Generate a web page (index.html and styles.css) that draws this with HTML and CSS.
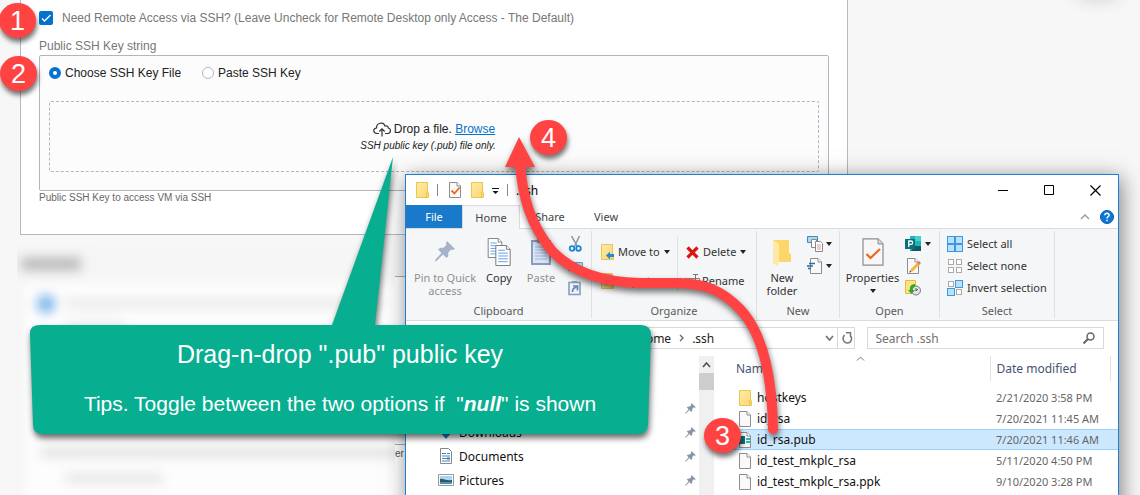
FILE: index.html
```html
<!DOCTYPE html>
<html lang="en">
<head>
<meta charset="utf-8">
<title>SSH key upload</title>
<link rel="stylesheet" href="styles.css">
</head>
<body>
<svg class="defs" aria-hidden="true">
  <defs>
    <linearGradient id="fold" x1="0" y1="0" x2="1" y2="1"><stop offset="0" stop-color="#ffe9a6"/><stop offset="1" stop-color="#fbd970"/></linearGradient>
    <symbol id="folder" viewBox="0 0 13 16"><path d="M.5.5h11v10l1 .5v4.500H.5z" fill="url(#fold)" stroke="#e9c552"/><path d="M10.500 15V10.500l2-.5" fill="none" stroke="#e9c552"/></symbol>
    <symbol id="doc" viewBox="0 0 12 16"><path d="M.5.5h7.500l3.500 3.500v11.500H.5z" fill="#f9f9f9" stroke="#8d8d8d"/><path d="M8 .5V4h3.500" fill="#fff" stroke="#8d8d8d"/></symbol>
    <symbol id="lines" viewBox="0 0 16 22"><path d="M.5.5h11l4 4v17H.5z" fill="#fff" stroke="#777"/><path d="M11.500.5v4h4" fill="#fff" stroke="#777"/><path d="M3 5.500h7M3 8.500h10M3 11.500h10M3 14.500h10M3 17.500h10" stroke="#5b9bea"/></symbol>
    <symbol id="pin" viewBox="0 0 20 21"><path d="M12 0l8 8-2 1-2-.5-3 3.500c1 3 0 4-1.500 5L8 13.500 1.500 20 0 20.500l.5-2L6.500 12 3 8.500C4.500 7 6 6.500 8 7l3.500-3L11 2z" fill="currentColor"/></symbol>
    <symbol id="drop" viewBox="0 0 6 4"><path d="M0 0h6L3 4z" fill="#222"/></symbol>
    <symbol id="sq" viewBox="0 0 8 8"><rect x="1.500" y="1.500" width="5" height="5" fill="#fff" stroke="#aaa"/></symbol>
    <symbol id="sqb" viewBox="0 0 8 8"><rect x=".5" y=".5" width="7" height="7" fill="#b9e1fc" stroke="#3c98e0"/></symbol>
  </defs>
</svg>
<main class="stage">
  <section class="panel">
    <label class="need"><input class="tick" type="checkbox" checked><span>Need Remote Access via SSH? (Leave Uncheck for Remote Desktop only Access - The Default)</span></label>
    <div class="caption">Public SSH Key string</div>
    <div class="keybox">
      <div class="radios">
        <label class="opt"><input class="dot" type="radio" name="mode" checked><span>Choose SSH Key File</span></label>
        <label class="opt"><input class="dot" type="radio" name="mode"><span>Paste SSH Key</span></label>
      </div>
      <div class="dropzone">
        <div class="dropline">
          <svg width="18" height="15" viewBox="0 0 18 15" fill="none" stroke="#333" stroke-width="1.200"><path d="M6 11.500H4C-.3 11-.2 6.500 3.500 6 3.300.8 10.500-.8 12 4c2.300-.6 3.300.6 3.300 2C18.500 7 18 11.300 14.500 11.500H12M9 14.500V7M6.300 9.500L9 6.800l2.700 2.700"/></svg>
          <span>Drop a file. <a class="browse" href="#">Browse</a></span>
        </div>
        <em class="hint">SSH public key (.pub) file only.</em>
      </div>
    </div>
    <div class="help">Public SSH Key to access VM via SSH</div>
  </section>
  <section class="lower">
    <div class="under"><div class="field"></div><span class="tail">er</span></div>
    <div class="haze">
      <div class="hazecard"></div>
      <div class="smear smear-title"></div>
      <div class="smear smear-dot"></div>
      <div class="smear smear-a"></div>
      <div class="smear smear-b"></div>
      <div class="smear smear-c"></div>
      <div class="smear smear-d"></div>
    </div>
  </section>
  <div class="corner"></div>

  <section class="window">
    <header class="titlebar">
      <svg class="quick" width="100" height="18" viewBox="0 0 100 18">
        <use href="#folder" x="0" y="1" width="13" height="16"/><path d="M21.500 3v12M91.500 3v12" stroke="#888"/>
        <use href="#doc" x="33" y="1" width="12" height="16"/><path d="M35.500 9.500l3 3 5-6" fill="none" stroke="#f0661e" stroke-width="1.800"/>
        <use href="#folder" x="55" y="1" width="13" height="16"/><path d="M76 7.500h7" stroke="#111"/><path d="M76.500 10h6l-3 3z" fill="#111"/>
      </svg>
      <span class="wtitle">.ssh</span>
      <div class="winbtns">
        <button class="wbtn" aria-label="Minimize"><svg width="11" height="11"><path d="M0 5.500h10" stroke="#000"/></svg></button>
        <button class="wbtn" aria-label="Maximize"><svg width="11" height="11"><path d="M.5.5h9v9h-9z" fill="none" stroke="#000"/></svg></button>
        <button class="wbtn" aria-label="Close"><svg width="11" height="11"><path d="M.5.5l10 10m0-10l-10 10" stroke="#000" stroke-width="1.200"/></svg></button>
      </div>
    </header>
    <nav class="tabs">
      <button class="tab file">File</button><button class="tab home">Home</button><button class="tab share">Share</button><button class="tab view">View</button>
      <div class="tabend"><svg width="10" height="6"><path d="M1 5l4-4 4 4" fill="none" stroke="#999" stroke-width="1.400"/></svg>
      <svg width="14" height="14" viewBox="0 0 14 14"><circle cx="7" cy="7" r="6.500" fill="#0a78d6" stroke="#0a5aa6"/><path d="M4.800 5.200c.2-2.500 4.500-2.400 4.300 0C9 6.500 7 6.600 7 8.500M7 9.700v1.500" fill="none" stroke="#fff" stroke-width="1.500"/></svg></div>
    </nav>
    <div class="ribbon">
      <div class="group g-clip">
        <div class="tools">
          <button class="big w-pin muted"><svg width="20" height="28" viewBox="0 -3 20 28"><use href="#pin" width="20" height="21" color="#a5b2c8"/></svg><span>Pin to Quick access</span></button>
          <button class="big w-copy"><svg width="24" height="28" viewBox="0 0 24 28"><use href="#lines" x="0" y="0" width="16" height="20"/><use href="#lines" x="8" y="7" width="16" height="21"/></svg><span>Copy</span></button>
          <button class="big w-paste muted"><svg width="20" height="28" viewBox="0 0 20 28"><path d="M1 3h18v23H1z" fill="#dbe4f4" stroke="#8b9bbd" stroke-width="2"/><path d="M6 1h8v4H6z" fill="#8b9bbd"/><path d="M4 9h12M4 12h12M4 15h12M4 18h12M4 21h12" stroke="#9fb4dc"/></svg><span>Paste</span></button>
          <div class="minis">
            <svg width="16" height="16" viewBox="0 0 16 16" fill="none"><path d="M3.500 0l6 10.500M11.500 0L6.500 10.500" stroke="#8795a5" stroke-width="1.500"/><circle cx="4" cy="12.500" r="2.300" stroke="#1688d4" stroke-width="1.800"/><circle cx="10.500" cy="12.500" r="2.300" stroke="#1688d4" stroke-width="1.800"/></svg>
            <svg width="16" height="16" viewBox="0 0 16 16"><path d="M.5 4.500h14v8H.5z" fill="#a9d4f5" stroke="#5fa2d4"/><path d="M2 6l2 5m1-5l1 5m2-1h1m1 0h1m1 0h1" stroke="#222"/></svg>
            <svg width="16" height="16" viewBox="0 0 16 16"><path d="M1 2.500h11v12H1z" fill="#eef3fb" stroke="#8b9bbd" stroke-width="1.600"/><path d="M4 1h5v2H4z" fill="#8b9bbd"/><path d="M4.500 12c0-3 2-4.500 4-4.500M5 6h4.500v4.500" fill="none" stroke="#6c83b0" stroke-width="1.700"/></svg>
          </div>
        </div>
        <div class="gname">Clipboard</div>
      </div>
      <div class="group g-org">
        <div class="tools">
          <div class="stack first">
            <button class="row"><svg width="13" height="16"><use href="#folder" width="13" height="16"/><path d="M5 11.500l4-4v2.500h4v3H9v2.500z" fill="#2a86d6"/></svg>Move to<svg width="6" height="4"><use href="#drop" width="6" height="4"/></svg></button>
            <button class="row"><svg width="13" height="16"><use href="#folder" width="13" height="16"/><use href="#doc" x="4" y="1" width="9" height="11"/></svg>Copy to<svg width="6" height="4"><use href="#drop" width="6" height="4"/></svg></button>
          </div>
          <div class="stack second">
            <button class="row"><svg width="13" height="13" viewBox="0 0 13 13"><path d="M1.500 1.500l10 10m0-10l-10 10" stroke="#dd1414" stroke-width="3.200"/></svg>Delete<svg width="6" height="4"><use href="#drop" width="6" height="4"/></svg></button>
            <button class="row rename"><svg width="16" height="14" viewBox="0 0 16 14"><path d="M.5 4.500h15v7H.5z" fill="#fff" stroke="#888"/><path d="M2 6h8v4H2z" fill="#7eb4ea"/><path d="M9 .5h5M11.500.5v13M9 13.500h5" stroke="#777"/></svg>Rename</button>
          </div>
        </div>
        <div class="gname">Organize</div>
      </div>
      <div class="group g-new">
        <div class="tools">
          <button class="big w-new"><svg width="20" height="28" viewBox="0 0 20 28"><path d="M1 2h16v13l2 1v8H1z" fill="#fbd668"/><path d="M1 2l6 4v17l-1 6-5-4z" fill="#ffe9a9"/></svg><span>New folder</span></button>
          <div class="minis">
            <div class="mini"><svg width="16" height="16" viewBox="0 0 16 16"><path d="M.5.5h10v6H.5z" fill="#aed7f0" stroke="#3f8cb8"/><path d="M4.500 3.500h5v8h-5z" fill="#fff" stroke="#888"/><path d="M8.500 5.500h5l2 2v8h-7z" fill="#fff" stroke="#888"/><path d="M10 9h4M10 11h4M10 13h4" stroke="#e39aa0"/></svg><svg width="6" height="4"><use href="#drop" width="6" height="4"/></svg></div>
            <div class="mini"><svg width="16" height="16" viewBox="0 0 16 16"><use href="#doc" x="3" y="0" width="12" height="16"/><path d="M2 5.500h6M0 8h6M1 10.500h3" stroke="#2a6ca8" stroke-width="1.300"/></svg><svg width="6" height="4"><use href="#drop" width="6" height="4"/></svg></div>
          </div>
        </div>
        <div class="gname">New</div>
      </div>
      <div class="group g-open">
        <div class="tools">
          <button class="big w-prop"><svg width="22" height="28" viewBox="0 0 22 28"><path d="M1 .8h15l5 5v21.400H1z" fill="#f7f7f7" stroke="#8c8c8c" stroke-width="1.200"/><path d="M16 1v5h5" fill="#ddd" stroke="#8c8c8c"/><path d="M4.500 16l4 4L18 11" fill="none" stroke="#f0661e" stroke-width="2.200"/></svg><span>Properties</span><svg width="6" height="4"><use href="#drop" width="6" height="4"/></svg></button>
          <div class="minis">
            <div class="mini"><svg width="17" height="16" viewBox="0 0 17 16"><path d="M5 0h11v15H5z" fill="#20b3b8"/><path d="M10 0h6v5h-6z" fill="#48d0d3"/><path d="M10 10h6v5H6z" fill="#11595c"/><path d="M0 3h10v10H0z" fill="#087277"/><path d="M3.800 11V5h2c2.500 0 2.500 3.300 0 3.300H4" fill="none" stroke="#fff" stroke-width="1.300"/></svg><svg width="6" height="4"><use href="#drop" width="6" height="4"/></svg></div>
            <div class="mini"><svg width="16" height="16" viewBox="0 0 16 16"><use href="#doc" x="2" y="0" width="12" height="16"/><path d="M6 13l8-8" stroke="#f1b93a" stroke-width="3"/><path d="M13 6l2-2" stroke="#e0786a" stroke-width="3"/><path d="M4.500 14.500l.5-2 1.500 1.500z" fill="#333"/></svg></div>
            <div class="mini"><svg width="16" height="16" viewBox="0 0 16 16"><path d="M.5.5h10v13H.5z" fill="#ffe083" stroke="#e3bd42"/><circle cx="11" cy="10.500" r="4.500" fill="#e2e2e2" stroke="#777"/><path d="M11 8v3l2-2" fill="none" stroke="#555"/><path d="M10 4C5 4 4.500 8 5 10H3l3.500 4L10 10H8c-.3-2 .5-3 2-3z" fill="#35a82b"/></svg></div>
          </div>
        </div>
        <div class="gname">Open</div>
      </div>
      <div class="group g-sel">
        <div class="tools">
          <div class="stack third">
            <button class="row"><svg width="16" height="16"><use href="#sqb" width="8" height="8"/><use href="#sqb" x="8" width="8" height="8"/><use href="#sqb" y="8" width="8" height="8"/><use href="#sqb" x="8" y="8" width="8" height="8"/></svg>Select all</button>
            <button class="row"><svg width="16" height="16"><use href="#sq" width="8" height="8"/><use href="#sq" x="8" width="8" height="8"/><use href="#sq" y="8" width="8" height="8"/><use href="#sq" x="8" y="8" width="8" height="8"/></svg>Select none</button>
            <button class="row"><svg width="16" height="16"><use href="#sq" width="8" height="8"/><use href="#sqb" x="8" width="8" height="8"/><use href="#sqb" y="8" width="8" height="8"/><use href="#sq" x="8" y="8" width="8" height="8"/></svg>Invert selection</button>
          </div>
        </div>
        <div class="gname">Select</div>
      </div>
    </div>
    <div class="address">
      <div class="path"><span>Home</span><svg width="5" height="8"><path d="M1 1l3 3-3 3" fill="none" stroke="#666" stroke-width="1.300"/></svg><span>.ssh</span>
        <div class="pathend"><svg width="9" height="6"><path d="M1 1l3.500 4L8 1" fill="none" stroke="#777" stroke-width="1.800"/></svg><button class="reload" aria-label="Refresh"><svg width="11" height="12" viewBox="0 0 11 12"><path d="M2.500 3C-.5 7 2 11 5.500 11S11 6.500 8 3M4 .8h4.500V5" fill="none" stroke="#777" stroke-width="1.500"/></svg></button></div>
      </div>
      <div class="search"><input class="find" type="text" placeholder="Search .ssh" aria-label="Search .ssh"><svg width="12" height="12" viewBox="0 0 12 12" fill="none" stroke="#666"><circle cx="7.500" cy="4.500" r="3.500" stroke-width="1.500"/><path d="M5 7l-4.500 4.500" stroke-width="2"/></svg></div>
    </div>
    <div class="body">
      <ul class="places">
        <li class="place"><svg class="pinned" width="11" height="11"><use href="#pin" width="11" height="11"/></svg></li>
        <li class="place"><svg width="16" height="16"><path d="M5 1h6v6h4l-7 8-7-8h4z" fill="#2c7bd0"/></svg><span>Downloads</span><svg class="pinned" width="11" height="11"><use href="#pin" width="11" height="11"/></svg></li>
        <li class="place"><svg width="16" height="16" viewBox="0 0 16 16"><path d="M2.500.5h8l3 3v12h-11z" fill="#fff" stroke="#888"/><path d="M4 5.500h4M4 8h8M4 10.500h5M4 13h8M9 5.500h3" stroke="#3a8bc8"/><path d="M9 9.500h3v2H9z" fill="#3a7bb0"/></svg><span>Documents</span><svg class="pinned" width="11" height="11"><use href="#pin" width="11" height="11"/></svg></li>
        <li class="place"><svg width="16" height="16" viewBox="0 0 16 16"><path d="M.5 2.500h15v11H.5z" fill="#fff" stroke="#999"/><path d="M2 4h12v8H2z" fill="#a9d5f2"/><path d="M2 7c3-1 5 2 12 1v2H2z" fill="#2c5a5e"/><path d="M2 10h12v2H2z" fill="#4b8ec4"/></svg><span>Pictures</span><svg class="pinned" width="11" height="11"><use href="#pin" width="11" height="11"/></svg></li>
      </ul>
      <div class="scroll"><svg width="9" height="6"><path d="M1 5l3.500-4L8 5" fill="none" stroke="#555" stroke-width="1.700"/></svg><div class="thumb"></div></div>
      <table class="files">
        <thead><tr><th>Name<svg class="sort" width="9" height="5"><path d="M1 4.500l3.500-3.500L8 4.500" fill="none" stroke="#777"/></svg></th><th class="date">Date modified</th><th class="last"></th></tr></thead>
        <tbody>
          <tr><td><div class="fname"><svg width="13" height="16"><use href="#folder" width="13" height="16"/></svg>hostkeys</div></td><td class="date">2/21/2020 3:58 PM</td><td></td></tr>
          <tr><td><div class="fname"><svg width="13" height="16"><use href="#doc" width="12" height="16"/></svg>id_rsa</div></td><td class="date">7/20/2021 11:45 AM</td><td></td></tr>
          <tr class="picked"><td><div class="fname"><svg width="13" height="16"><use href="#doc" width="12" height="16"/><path d="M0 4h6v8H0z" fill="#087277"/><path d="M7 6h4v2H7zM7 9h4v2H7z" fill="#26b4bd"/></svg>id_rsa.pub</div></td><td class="date">7/20/2021 11:46 AM</td><td></td></tr>
          <tr><td><div class="fname"><svg width="13" height="16"><use href="#doc" width="12" height="16"/></svg>id_test_mkplc_rsa</div></td><td class="date">5/11/2020 4:50 PM</td><td></td></tr>
          <tr><td><div class="fname"><svg width="13" height="16"><use href="#doc" width="12" height="16"/></svg>id_test_mkplc_rsa.ppk</div></td><td class="date">9/10/2020 3:28 PM</td><td></td></tr>
        </tbody>
      </table>
    </div>
  </section>

  <svg class="arrow" width="300" height="320" viewBox="500 125 300 320">
    <path d="M773 429C772 370 760 330 740 309 722 290 705 284 680 283L640 283C600 282 572 271 553 252 530 225 522 195 520 162" fill="none" stroke="#ff4343" stroke-width="10" stroke-linecap="round"/>
    <path d="M519 137L535 167H505z" fill="#ff4343"/>
  </svg>
  <div class="callout">
    <svg class="bubble" width="624" height="280" viewBox="29 156 624 280"><path d="M393 157L375 325H641Q651 325 651 335L648 425Q647 434 638 434H43Q33 434 33 425L30 335Q29 325 40 325H332z" fill="#08ae90"/></svg>
    <div class="words"><p class="lead">Drag-n-drop ".pub" public key</p><p class="tips">Tips. Toggle between the two options if &nbsp;"<b><i>null</i></b>" is shown</p></div>
  </div>
  <span class="step s1">1</span><span class="step s2">2</span><span class="step s3">3</span><span class="step s4">4</span>
</main>
</body>
</html>
```
FILE: styles.css
```css
* { box-sizing: border-box; }
body { margin: 0; background: #f7f7f7; font: 12px/16px "Liberation Sans", Arial, sans-serif; color: #222; }
button { border: 0; padding: 0; margin: 0; background: none; font: inherit; color: inherit; }
svg { display: block; flex: none; }
.defs { position: absolute; width: 0; height: 0; }
.stage { position: relative; height: 100vh; overflow: hidden; }

.panel { margin: 0 292px 0 20px; padding: 10px 18px 29px; background: #fff; border: 1px solid #b3b8c2; border-top: 0; }
.need { display: flex; align-items: center; gap: 9px; color: #777; }
.tick { appearance: none; width: 14px; height: 14px; margin: 0; border-radius: 2px; background: #0572ce url("data:image/svg+xml,%3Csvg xmlns='http://www.w3.org/2000/svg' viewBox='0 0 14 14'%3E%3Cpath d='M3 7.500l2.500 2.500L11.500 4' fill='none' stroke='white' stroke-width='1.300'/%3E%3C/svg%3E"); }
.caption { margin-top: 12px; color: #777; line-height: 16px; }
.keybox { margin-top: 1px; padding: 9px 9px 18px; border: 1px solid #b0b5bf; border-radius: 2px; background: #fcfcfc; }
.radios { display: flex; gap: 21px; height: 16px; }
.opt { display: flex; align-items: center; gap: 4px; }
.dot { appearance: none; width: 12px; height: 12px; margin: 0; border: 1px solid #b0b5bf; border-radius: 50%; background: #fff; }
.dot:checked { border: 4px solid #0572ce; }
.dropzone { display: flex; flex-direction: column; align-items: center; margin-top: 20px; padding-top: 19px; height: 71px; border: 1px dashed #b0b5bf; border-radius: 2px; }
.dropline { display: flex; align-items: center; gap: 3px; }
.browse { color: #0572ce; }
.hint { font-size: 10px; line-height: 18px; margin-right: 12px; }
.help { font-size: 10px; color: #666; line-height: 14px; }

.lower { position: relative; margin-left: 17px; padding-top: 41px; }
.under { margin-right: 292px; padding-left: 378px; background: #fff; border-top: 1px solid #aaa; height: 300px; }
.field { height: 168px; border-bottom: 1px solid #aaa; }
.tail { color: #555; font-size: 10px; line-height: 17px; }
.haze { position: absolute; left: 0; top: 10px; width: 378px; height: 260px; overflow: hidden; background: #f6f6f6; }
.hazecard { position: absolute; left: 8px; top: 38px; right: -10px; bottom: -10px; background: #fdfdfd; filter: blur(6px); }
.smear { position: absolute; filter: blur(6px); }
.smear-title { left: 4px; top: 13px; width: 60px; height: 12px; background: #b4b4b4; }
.smear-dot { left: 20px; top: 50px; width: 18px; height: 18px; border-radius: 50%; background: #6fb0e8; }
.smear-a { left: 48px; top: 54px; width: 315px; height: 9px; background: #e8e8e8; }
.smear-b { left: 48px; top: 76px; width: 60px; height: 9px; background: #ebebeb; }
.smear-c { left: 24px; top: 203px; width: 370px; height: 9px; background: #dedede; }
.smear-d { left: 48px; top: 229px; width: 98px; height: 9px; background: #e4e4e4; }
.corner { position: absolute; right: 20px; top: -16px; width: 45px; height: 14px; border-radius: 50%; box-shadow: 0 2px 16px #ccc; }

.window { position: absolute; left: 405px; right: 21px; top: 174px; height: 340px; background: #fff; border: 1px solid #1b81d6; box-shadow: 2px 4px 20px rgba(0,0,0,.5); font-family: "Noto Sans", "Open Sans", sans-serif; font-size: 11px; line-height: 13px; }
.titlebar { display: flex; align-items: center; height: 30px; padding-left: 10px; }
.wtitle { font-size: 12px; color: #000; }
.winbtns { display: flex; margin-left: auto; }
.wbtn { width: 46px; height: 28px; display: flex; align-items: center; justify-content: center; }
.tabs { display: flex; height: 24px; border-bottom: 1px solid #dadbdc; color: #444; }
.tab { height: 23px; text-align: center; }
.file { width: 56px; background: #1979ca; color: #fff; }
.home { width: 58px; height: 24px; background: #f5f6f7; border: 1px solid #dadbdc; border-bottom: 0; }
.share { width: 60px; }
.view { width: 52px; }
.tabend { display: flex; align-items: center; gap: 10px; margin-left: auto; padding-right: 4px; }
.ribbon { display: flex; height: 92px; padding-top: 2px; background: #f5f6f7; border-bottom: 1px solid #dadbdc; color: #333; }
.group { display: flex; flex-direction: column; height: 87px; border-right: 1px solid #dfe1e3; }
.g-clip { width: 186px; } .g-org { width: 165px; } .g-new { width: 83px; } .g-open { width: 100px; } .g-sel { width: 115px; }
.tools { display: flex; height: 73px; padding-top: 5px; }
.gname { text-align: center; color: #5a5a5a; line-height: 14px; }
.big { display: flex; flex-direction: column; align-items: center; height: 64px; padding-top: 2px; gap: 5px; }
.big span { display: block; }
.muted { color: #8f8f8f; }
.w-pin { width: 78px; padding-left: 6px; padding-right: 6px; }
.w-copy { width: 30px; }
.w-paste { width: 54px; }
.w-new { width: 50px; padding: 2px 6px 0; }
.w-prop { width: 65px; }
.minis { display: flex; flex-direction: column; gap: 6px; }
.mini { display: flex; align-items: center; gap: 3px; }
.row { display: flex; align-items: center; gap: 4px; height: 16px; line-height: 12px; }
.stack { display: flex; flex-direction: column; }
.first { gap: 13px; width: 86px; height: 56px; padding: 8px 0 0 9px; border-right: 1px solid #dfe1e3; }
.second { gap: 13px; width: 76px; padding: 8px 0 0 8px; }
.rename { gap: 2px; margin-left: -2px; }
.third { gap: 6px; padding-left: 7px; }
.address { display: flex; gap: 12px; padding: 6px 14px 0 64px; font-size: 12px; }
.path { flex: 1 1 385px; display: flex; align-items: center; gap: 8px; height: 22px; padding-left: 166px; border: 1px solid #d9d9d9; }
.pathend { display: flex; align-items: center; gap: 3px; margin-left: auto; }
.reload { display: flex; align-items: center; width: 17px; height: 20px; padding-left: 4px; border-left: 1px solid #d9d9d9; }
.search { flex: 0 1 238px; display: flex; align-items: center; height: 22px; padding: 0 8px; border: 1px solid #d9d9d9; }
.find { flex: 1; min-width: 0; border: 0; padding: 0; outline: 0; font: 12px "Noto Sans", sans-serif; background: none; }
.find::placeholder { color: #707070; opacity: 1; }
.body { display: flex; margin-top: 7px; height: 170px; font-size: 12px; color: #111; }
.places { width: 293px; margin: 0; padding: 40px 3px 0 32px; list-style: none; }
.place { display: flex; align-items: center; gap: 5px; height: 24px; }
.pinned { margin-left: auto; color: #8795a5; }
.scroll { display: flex; flex-direction: column; align-items: center; width: 15px; padding-top: 6px; background: #f0f0f0; gap: 5px; }
.thumb { width: 15px; height: 17px; background: #cdcdcd; }
.files { flex: 1; align-self: flex-start; margin-left: 4px; border-collapse: collapse; table-layout: fixed; }
.files th { position: relative; height: 25px; padding: 0 0 0 18px; text-align: left; font-weight: 400; color: #44546f; border-right: 1px solid #e2e2e2; }
.files th.date { width: 120px; padding-left: 6px; }
.files th.last { width: 8px; padding: 0; border: 0; }
.sort { position: absolute; left: 138px; top: 0; }
.files td { height: 21px; padding: 0; }
.files td.date { padding-left: 6px; color: #666; font-size: 11px; }
.fname { display: flex; align-items: center; gap: 5px; padding-left: 21px; }
.files tbody::before { content: ""; display: block; height: 6px; }
.picked { background: #cce8ff; box-shadow: inset 0 1px #99d1ff, inset 0 -1px #99d1ff; }

.arrow { position: absolute; left: 500px; top: 125px; filter: drop-shadow(1px 4px 3px rgba(0,0,0,.55)); }
.callout { position: absolute; left: 29px; top: 156px; width: 624px; }
.bubble { filter: drop-shadow(1px 4px 3px rgba(0,0,0,.6)); }
.words { position: absolute; left: 0; right: 2px; top: 169px; text-align: center; color: #fff; }
.lead { margin: 15px 0 0; font-size: 25px; line-height: 28px; }
.tips { margin: 24px 0 0; font-size: 21px; line-height: 24px; }
.step { position: absolute; width: 37px; height: 35px; border-radius: 50%; background: #ff4343; color: #fff; font-size: 27px; line-height: 36px; text-align: center; box-shadow: 1px 4px 5px rgba(0,0,0,.55); }
.s1 { left: -1px; top: 3px; } .s2 { left: 0; top: 56px; } .s3 { left: 704px; top: 418px; } .s4 { left: 530px; top: 120px; }
```
